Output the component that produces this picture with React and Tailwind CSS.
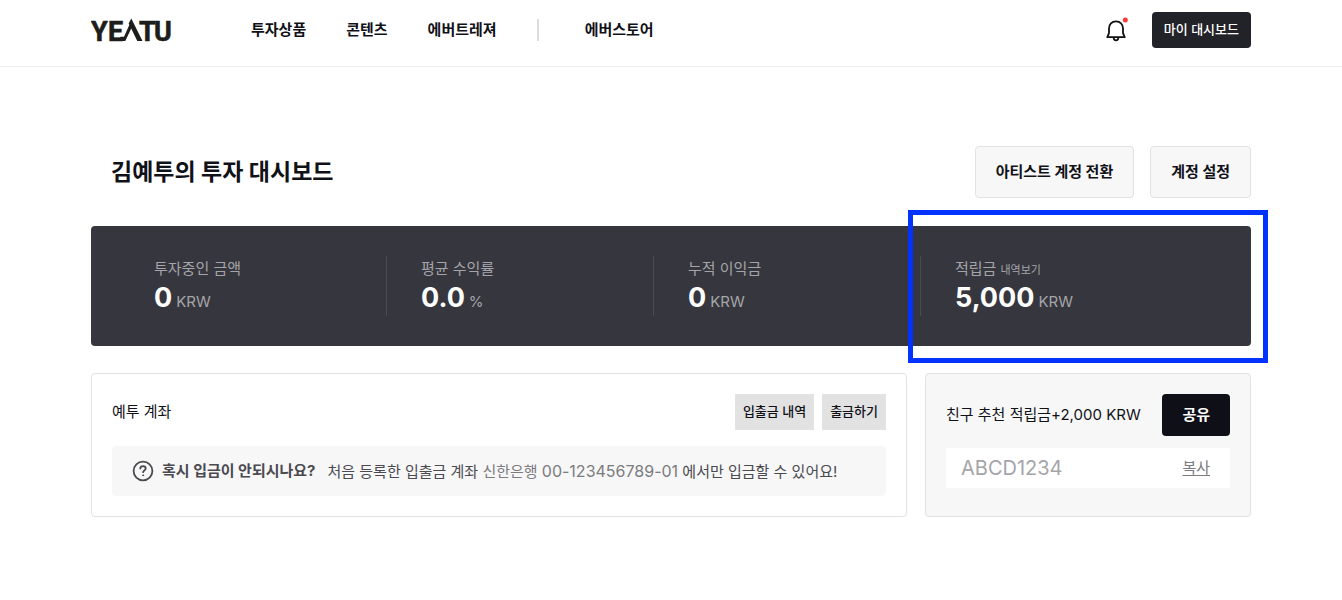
const navLinks = ["투자상품", "콘텐츠", "에버트레져"];

const stats = [
  { label: "투자중인 금액", value: "0", unit: "KRW" },
  { label: "평균 수익률", value: "0.0", unit: "%" },
  { label: "누적 이익금", value: "0", unit: "KRW" },
  { label: "적립금", value: "5,000", unit: "KRW", link: "내역보기" },
];

function Logo() {
  return (
    <svg width="81" height="36" viewBox="0 0 81 36" role="img" aria-label="YEATU" fill="#1d1d1b" stroke="#1d1d1b" strokeWidth="0.6">
      <text x="0 17" y="28.700" className="font-['Roboto',sans-serif] text-[27px] font-bold">YE</text>
      <path stroke="none" d="M28 29 L29.500 24.800 H33 L38.300 13 L37.600 11.500 L40.300 6.500 L51.500 29 H46.300 L40.200 16.500 L34.300 29 Z" />
      <text x="48 63" y="28.700" className="font-['Roboto',sans-serif] text-[27px] font-bold">TU</text>
    </svg>
  );
}

function BellIcon() {
  return (
    <svg width="24" height="26" viewBox="0 0 24 26" fill="none" stroke="#111" strokeWidth="1.8" strokeLinecap="round" strokeLinejoin="round">
      <path d="M12 4.400c-4.200 0-7 3-7 7v4.800L3.300 20.200h17.400L19 16.200v-4.800c0-4-2.800-7-7-7Z" />
      <path d="M9.700 20.800c0 1.600.9 2.500 2.300 2.500s2.300-.9 2.300-2.500" />
      <circle cx="21.300" cy="3" r="2.500" fill="#ff3b3b" stroke="none" />
    </svg>
  );
}

function HelpIcon() {
  return (
    <svg width="22" height="22" viewBox="0 0 22 22" fill="none" stroke="#4a4a50" strokeWidth="1.8" strokeLinecap="round" strokeLinejoin="round" aria-hidden="true">
      <circle cx="11" cy="11" r="9.400" />
      <path d="M8.300 8.600c0-1.500 1.200-2.500 2.700-2.500s2.700 1 2.700 2.400c0 1.900-2.600 1.900-2.600 3.700" />
      <circle cx="11.100" cy="15.300" r="0.500" fill="#4a4a50" strokeWidth="1" />
    </svg>
  );
}

export default function App() {
  return (
    <div className="bg-white font-['Inter','Noto_Sans_CJK_KR',sans-serif] text-[#111118]">
      <header className="border-b border-[#eeeeee]">
        <div className="mx-auto flex max-w-[1160px] items-center pt-3 pb-[18px]">
          <a href="#home">
            <Logo />
          </a>
          <nav className="ml-[79px] flex items-center gap-10 text-[15px] leading-6 font-bold">
            {navLinks.map((name) => (
              <a key={name} href="#menu">{name}</a>
            ))}
            <span className="h-[22px] w-0.5 bg-[#dddddd]" />
            <a href="#store" className="ml-1.5">에버스토어</a>
          </nav>
          <button type="button" aria-label="알림" className="ml-auto">
            <BellIcon />
          </button>
          <button type="button" className="ml-6 h-9 rounded bg-[#222229] px-3 text-[13px] font-medium text-white">
            마이 대시보드
          </button>
        </div>
      </header>

      <main className="mx-auto max-w-[1160px] pt-[79px] pb-20">
        <div className="flex items-center gap-4">
          <h1 className="mr-auto pl-5 text-[23px] leading-8 font-bold">김예투의 투자 대시보드</h1>
          <button type="button" className="h-[52px] rounded border border-[#e2e2e2] bg-[#f7f7f7] px-5 text-[15px] font-bold">
            아티스트 계정 전환
          </button>
          <button type="button" className="h-[52px] rounded border border-[#e2e2e2] bg-[#f7f7f7] px-5 text-[15px] font-bold">
            계정 설정
          </button>
        </div>

        <section className="relative mt-7 rounded bg-[#36363e] py-[30px] pr-16 pl-7">
          <dl className="grid grid-cols-4">
            {stats.map((s) => (
              <div key={s.label} className="h-[60px] border-l border-[#4b4b51] pl-[34px] first:border-transparent">
                <dt className="flex h-[26px] items-baseline gap-1 text-[15px] leading-[26px] text-[#a5a5a9]">
                  {s.label}
                  {s.link && <a href="#history" className="text-[11px]">{s.link}</a>}
                </dt>
                <dd className="flex items-baseline gap-1 leading-8">
                  <span className="text-[27px] font-bold text-white">{s.value}</span>
                  <span className="text-[15px] text-[#a5a5a9]">{s.unit}</span>
                </dd>
              </div>
            ))}
          </dl>
          <div className="pointer-events-none absolute -top-4 -right-[17px] -bottom-[17px] w-[360px] border-5 border-[#0033ff]" />
        </section>

        <div className="mt-[27px] grid grid-cols-[1fr_326px] gap-[18px]">
          <section className="rounded border border-[#e2e2e2] p-5">
            <div className="flex items-center gap-2">
              <h2 className="mr-auto text-[15px]">예투 계좌</h2>
              <button type="button" className="h-9 bg-[#e2e2e2] px-2 text-[13px] font-medium">입출금 내역</button>
              <button type="button" className="h-9 bg-[#e2e2e2] px-2 text-[13px] font-medium">출금하기</button>
            </div>
            <p className="mt-4 flex h-[50px] items-center rounded bg-[#f7f7f7] px-5 text-[15px] text-[#4a4a50]">
              <HelpIcon />
              <strong className="ml-2 font-bold">혹시 입금이 안되시나요?</strong>
              <span className="ml-3">
                처음 등록한 입출금 계좌 <span className="text-[#7b7b80]">신한은행 <span className="text-base">00-123456789-01</span></span> 에서만 입금할 수 있어요!
              </span>
            </p>
          </section>

          <section className="rounded border border-[#e2e2e2] bg-[#f7f7f7] p-5">
            <div className="flex items-center justify-between">
              <h2 className="text-[15px]">친구 추천 적립금+2,000 KRW</h2>
              <button type="button" className="h-[42px] rounded bg-[#0f0f17] px-5 text-[15px] font-bold text-white">공유</button>
            </div>
            <div className="mt-3 flex h-10 items-center bg-white pr-5 pl-[15px]">
              <input aria-label="추천 코드" readOnly value="ABCD1234" className="min-w-0 flex-1 text-xl text-[#a5a5a9] outline-none" />
              <button type="button" className="text-[15px] text-[#7b7b80] underline underline-offset-2">복사</button>
            </div>
          </section>
        </div>
      </main>
    </div>
  );
}
